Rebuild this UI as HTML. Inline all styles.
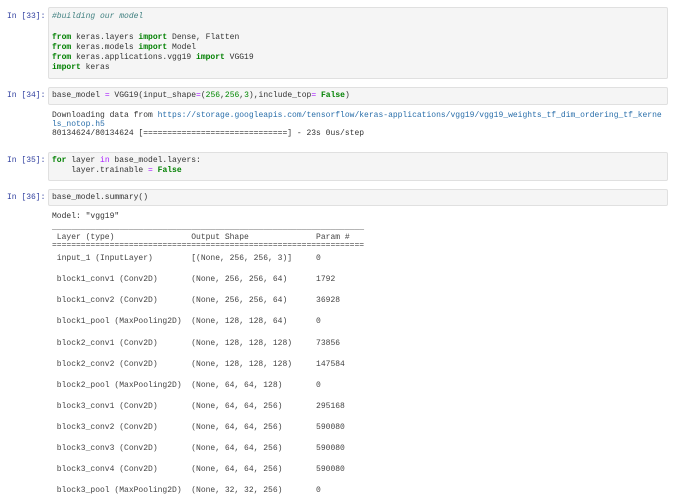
<!DOCTYPE html>
<html><head><style>
body{margin:0;width:676px;height:503px;background:#fff;overflow:hidden;position:relative;font-family:"Liberation Mono",monospace;font-size:8px;color:#333}
.p{position:absolute;left:7px;color:#303f9f;white-space:pre}
.box{position:absolute;left:48px;width:620px;background:#f5f5f5;border:1px solid #e0e0e0;border-radius:2px;box-sizing:border-box}
.l{position:absolute;left:52px;white-space:pre;line-height:10px}
.k{color:#008000;font-weight:bold}.o{color:#aa22ff}.n{color:#080}.c{color:#408080;font-style:italic}.u{color:#296eaa}
.t{color:#444}
</style></head><body>
<div class="box" style="top:7px;height:72px"></div>
<div class="p" style="top:12px">In [33]:</div>
<div class="l" style="top:12px"><span class="c">#building our model</span></div>
<div class="l" style="top:33px"><span class="k">from</span> keras.layers <span class="k">import</span> Dense, Flatten</div>
<div class="l" style="top:43px"><span class="k">from</span> keras.models <span class="k">import</span> Model</div>
<div class="l" style="top:53px"><span class="k">from</span> keras.applications.vgg19 <span class="k">import</span> VGG19</div>
<div class="l" style="top:63px"><span class="k">import</span> keras</div>

<div class="box" style="top:87px;height:18px"></div>
<div class="p" style="top:91px">In [34]:</div>
<div class="l" style="top:91px">base_model <span class="o">=</span> VGG19(input_shape<span class="o">=</span>(<span class="n">256</span>,<span class="n">256</span>,<span class="n">3</span>),include_top<span class="o">=</span> <span class="k">False</span>)</div>
<div class="l" style="top:111px">Downloading data from <span class="u">https://storage.googleapis.com/tensorflow/keras-applications/vgg19/vgg19_weights_tf_dim_ordering_tf_kerne</span></div>
<div class="l" style="top:120px"><span class="u">ls_notop.h5</span></div>
<div class="l" style="top:129px">80134624/80134624 [==============================] - 23s 0us/step</div>

<div class="box" style="top:152px;height:29px"></div>
<div class="p" style="top:156px">In [35]:</div>
<div class="l" style="top:156px"><span class="k">for</span> layer <span class="o">in</span> base_model.layers:</div>
<div class="l" style="top:166px">    layer.trainable <span class="o">=</span> <span class="k">False</span></div>

<div class="box" style="top:189px;height:17px"></div>
<div class="p" style="top:193px">In [36]:</div>
<div class="l" style="top:193px">base_model.summary()</div>
<div class="l" style="top:212px">Model: "vgg19"</div>
<div class="l t" style="top:223px">_________________________________________________________________</div>
<div class="l t" style="top:233px"> Layer (type)                Output Shape              Param #   </div>
<div class="l t" style="top:241px">=================================================================</div>
<div class="l t" style="top:254px"> input_1 (InputLayer)        [(None, 256, 256, 3)]     0         </div>
<div class="l t" style="top:275px"> block1_conv1 (Conv2D)       (None, 256, 256, 64)      1792      </div>
<div class="l t" style="top:296px"> block1_conv2 (Conv2D)       (None, 256, 256, 64)      36928     </div>
<div class="l t" style="top:317px"> block1_pool (MaxPooling2D)  (None, 128, 128, 64)      0         </div>
<div class="l t" style="top:339px"> block2_conv1 (Conv2D)       (None, 128, 128, 128)     73856     </div>
<div class="l t" style="top:360px"> block2_conv2 (Conv2D)       (None, 128, 128, 128)     147584    </div>
<div class="l t" style="top:381px"> block2_pool (MaxPooling2D)  (None, 64, 64, 128)       0         </div>
<div class="l t" style="top:402px"> block3_conv1 (Conv2D)       (None, 64, 64, 256)       295168    </div>
<div class="l t" style="top:423px"> block3_conv2 (Conv2D)       (None, 64, 64, 256)       590080    </div>
<div class="l t" style="top:444px"> block3_conv3 (Conv2D)       (None, 64, 64, 256)       590080    </div>
<div class="l t" style="top:465px"> block3_conv4 (Conv2D)       (None, 64, 64, 256)       590080    </div>
<div class="l t" style="top:486px"> block3_pool (MaxPooling2D)  (None, 32, 32, 256)       0         </div>
</body></html>
